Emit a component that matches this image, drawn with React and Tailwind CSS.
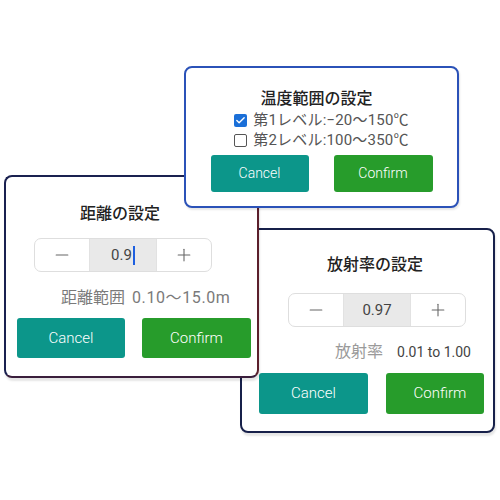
import { Minus, Plus, Check } from 'lucide-react';

const FONT = { fontFamily: 'Roboto, "Noto Sans CJK JP", sans-serif' };

// stepper used by distance & emissivity dialogs
const Stepper = ({ value, caret, className }) => (
  <div className={`flex h-[34px] w-[178px] rounded-[7px] border border-[#dedede] overflow-hidden bg-white ${className}`}>
    <div className="flex w-[54px] items-center justify-center">
      <Minus size={20} strokeWidth={1.3} color="#666" />
    </div>
    <div className="flex flex-1 items-center justify-center border-x border-[#e2e2e2] bg-[#e9e9e9] text-[15px] text-[#444]">
      <span>{value}</span>
      {caret && <span className="ml-[1px] h-[19px] w-[2px] bg-[#1d5fe0]" />}
    </div>
    <div className="flex w-[54px] items-center justify-center">
      <Plus size={20} strokeWidth={1.3} color="#666" />
    </div>
  </div>
);

const Btn = ({ label, color, className }) => (
  <div className={`flex items-center justify-center rounded-[3px] text-white font-light ${color} ${className}`}>
    {label}
  </div>
);

const CheckRow = ({ checked, label }) => (
  <div className="flex h-[20px] items-center gap-[6px] text-[15px] text-[#555]">
    {checked ? (
      <span className="flex h-[13px] w-[13px] items-center justify-center rounded-[2px] bg-[#1a6fd8]">
        <Check size={11} strokeWidth={3} color="#fff" />
      </span>
    ) : (
      <span className="h-[13px] w-[13px] rounded-[2px] border-[1.5px] border-[#555]" />
    )}
    <span className="tracking-[0.2px]">{label}</span>
  </div>
);

export default function App() {
  return (
    <div className="relative h-[500px] w-[500px] overflow-hidden bg-white" style={FONT}>
      {/* emissivity dialog (bottom of the stack) */}
      <div className="absolute left-[240px] top-[228px] flex h-[205px] w-[255px] flex-col overflow-hidden rounded-[8px] border-2 border-[#17204a] bg-white shadow-[1px_3px_2px_rgba(0,0,0,0.1)]">
        <div className="ml-[85px] mt-[24px] h-[22px] text-[16px] font-medium leading-[22px] text-[#222]">放射率の設定</div>
        <Stepper value="0.97" className="ml-[46px] mt-[17px]" />
        <div className="ml-[93px] mt-[15px] flex h-[20px] items-center">
          <span className="text-[16px] text-[#9a9a9a]">放射率</span>
          <span className="ml-[14px] text-[14px] text-[#444]">0.01 to 1.00</span>
        </div>
        <div className="ml-[17px] mt-[11px] flex gap-[18px] text-[15px]">
          <Btn label="Cancel" color="bg-[#0c968a]" className="h-[41px] w-[109px]" />
          <Btn label="Confirm" color="bg-[#279c2b]" className="h-[41px] w-[98px] pl-[10px]" />
        </div>
      </div>

      {/* distance dialog */}
      <div className="absolute left-[4px] top-[175px] flex h-[203px] w-[255px] flex-col rounded-[8px] border-2 border-[#1a2150] border-r-[#5b1f2c] border-b-[#3a1e3c] bg-white shadow-[1px_3px_2px_rgba(0,0,0,0.1)]">
        <div className="ml-[74px] mt-[26px] h-[22px] text-[16px] font-medium leading-[22px] text-[#222]">距離の設定</div>
        <Stepper value="0.9" caret className="ml-[28px] mt-[13px]" />
        <div className="ml-[55px] mt-[16px] flex h-[20px] items-center text-[16px] text-[#7a7a7a]">
          <span>距離範囲</span>
          <span className="ml-[7px] tracking-[0.6px]">0.10〜15.0m</span>
        </div>
        <div className="ml-[11px] mt-[10px] flex gap-[17px] text-[15px]">
          <Btn label="Cancel" color="bg-[#0c968a]" className="h-[40px] w-[108px]" />
          <Btn label="Confirm" color="bg-[#279c2b]" className="h-[40px] w-[109px]" />
        </div>
      </div>

      {/* temperature dialog (top of the stack) */}
      <div className="absolute left-[184px] top-[66px] flex h-[142px] w-[275px] flex-col items-center rounded-[8px] border-2 border-[#2b52b8] bg-white shadow-[1px_2px_2px_rgba(0,0,0,0.1)]">
        <div className="mt-[20px] h-[22px] pr-[10px] text-[16px] font-medium leading-[22px] text-[#222]">温度範囲の設定</div>
        <div className="flex flex-col">
          <CheckRow checked label="第1レベル:−20〜150℃" />
          <CheckRow label="第2レベル:100〜350℃" />
        </div>
        <div className="mt-[5px] flex gap-[25px] text-[14px]">
          <Btn label="Cancel" color="bg-[#0c968a]" className="h-[37px] w-[98px]" />
          <Btn label="Confirm" color="bg-[#279c2b]" className="h-[37px] w-[99px]" />
        </div>
      </div>
    </div>
  );
}
